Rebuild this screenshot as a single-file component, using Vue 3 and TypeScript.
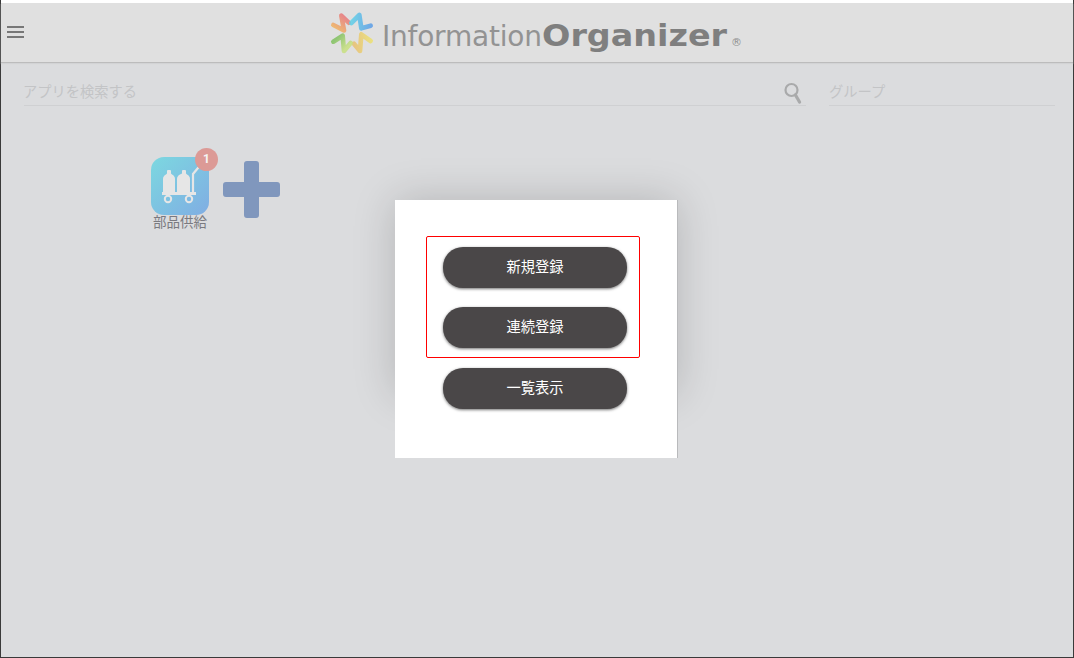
<script setup lang="ts">
const logoArms = [
  { id: 'armA', from: '#e8787a', to: '#f0b060', points: '40,82 72,98 64,54 86,75', x1: 65, y1: 50, x2: 38, y2: 85 },
  { id: 'armB', from: '#5fd0e8', to: '#5a9ce6', points: '94,76 118,52 124,92 152,84', x1: 93, y1: 78, x2: 155, y2: 85 },
  { id: 'armC', from: '#ece070', to: '#e8c070', points: '152,130 124,110 120,160 102,138', x1: 155, y1: 130, x2: 102, y2: 136 },
  { id: 'armD', from: '#80c060', to: '#c8e080', points: '40,132 68,114 72,160 92,136', x1: 38, y1: 133, x2: 68, y2: 162 },
]
</script>

<template>
  <div class="page">
    <header class="topbar">
      <button class="menu" aria-label="menu"><span></span><span></span><span></span></button>
      <div class="logo">
        <svg class="logo-mark" viewBox="30 40 132 132" width="44" height="44">
          <defs>
            <linearGradient v-for="arm in logoArms" :id="arm.id" :key="arm.id" gradientUnits="userSpaceOnUse"
              :x1="arm.x1" :y1="arm.y1" :x2="arm.x2" :y2="arm.y2">
              <stop offset="0" :stop-color="arm.from" />
              <stop offset="1" :stop-color="arm.to" />
            </linearGradient>
          </defs>
          <polyline v-for="arm in logoArms" :key="arm.id" :points="arm.points" fill="none" :stroke="`url(#${arm.id})`"
            stroke-width="14" stroke-linecap="round" stroke-linejoin="round" opacity="0.85" />
        </svg>
        <span class="logo-text">Information<b>Organizer</b></span>
        <span class="logo-reg">®</span>
      </div>
    </header>

    <div class="filters">
      <div class="field search">
        <span class="placeholder">アプリを検索する</span>
        <svg class="search-icon" viewBox="0 0 18 22" width="18" height="22">
          <circle cx="7.500" cy="8" r="6" fill="none" stroke="#a9aaab" stroke-width="2.200" />
          <path d="M11.500 13l4 7" fill="none" stroke="#a9aaab" stroke-width="3.200" stroke-linecap="round" />
        </svg>
      </div>
      <div class="field group">
        <span class="placeholder">グループ</span>
      </div>
    </div>

    <div class="apps">
      <div class="app">
        <div class="app-tile">
          <svg viewBox="0 0 58 58" width="58" height="58">
            <g fill="#e6e6e6">
              <path d="M12 35V22q0-3 3-4.500l1-1V14q0-1 1-1h2q1 0 1 1v2.500l1 1q3 1.500 3 4.500v13z" />
              <path d="M26 35V22q0-3 3-4.500l2-1V14q0-1 1-1h2q1 0 1 1v2.500l1 1q3 1.500 3 4.500v13z" />
              <rect x="11" y="35" width="34" height="3" />
            </g>
            <path d="M42 36V17l5-6" fill="none" stroke="#e6e6e6" stroke-width="2.200" stroke-linecap="round" />
            <circle cx="17" cy="42" r="3.200" fill="none" stroke="#e6e6e6" stroke-width="2" />
            <circle cx="38" cy="42" r="3.200" fill="none" stroke="#e6e6e6" stroke-width="2" />
          </svg>
          <span class="badge">1</span>
        </div>
        <span class="app-label">部品供給</span>
      </div>
      <svg class="add" viewBox="0 0 57 57" width="57" height="57">
        <path d="M21 3q0-3 3-3h9q3 0 3 3v18h18q3 0 3 3v9q0 3-3 3H36v18q0 3-3 3h-9q-3 0-3-3V36H3q-3 0-3-3v-9q0-3 3-3h18z" fill="#8097bd" />
      </svg>
    </div>

    <div class="dialog">
      <div class="highlight">
        <button class="action">新規登録</button>
        <button class="action">連続登録</button>
      </div>
      <button class="action last">一覧表示</button>
    </div>
  </div>
</template>

<style>
html, body { margin: 0; }
</style>

<style scoped>
.page {
  position: relative;
  z-index: 0;
  box-sizing: border-box;
  height: 658px;
  padding-top: 3px;
  background: linear-gradient(#fff 3px, #dbdcde 3px);
  border: solid #3a3a3a;
  border-width: 0 1px 1px;
  font-family: "Noto Sans CJK JP", "Liberation Sans", sans-serif;
}

.topbar {
  position: relative;
  display: flex;
  justify-content: center;
  align-items: center;
  box-sizing: border-box;
  height: 60px;
  background: #e0e0e0;
  border-bottom: 1px solid #bcbcbc;
  box-shadow: 0 1px 1px #d2d3d5;
}

.menu {
  position: absolute;
  left: 6px;
  top: 23px;
  display: flex;
  flex-direction: column;
  gap: 3px;
  width: 17px;
  padding: 0;
  border: 0;
  background: none;
}

.menu span {
  height: 2px;
  background: #777;
}

.logo {
  display: flex;
  align-items: center;
  margin-left: -2px;
  padding-top: 7px;
}

.logo-mark {
  margin: -7px 8px 0 0;
}

.logo-text {
  font-family: "DejaVu Sans", sans-serif;
  font-size: 28px;
  line-height: 36px;
  color: #939393;
  letter-spacing: -0.2px;
}

/* the wordmark is wider than any installed bold face */
.logo-text b {
  display: inline-block;
  margin-right: 19px;
  color: #7f7f7f;
  font-size: 30px;
  letter-spacing: 0;
  transform: scaleX(1.113);
  transform-origin: left;
}

.logo-reg {
  align-self: flex-end;
  margin: 0 0 6px 4px;
  font-family: "DejaVu Sans", sans-serif;
  font-size: 11px;
  color: #8f8f8f;
}

.filters {
  display: flex;
  gap: 23px;
  padding: 16px 18px 0 23px;
}

.field {
  display: flex;
  align-items: center;
  justify-content: space-between;
  box-sizing: border-box;
  height: 27px;
  padding-bottom: 4px;
  border-bottom: 1px solid #cfd0d2;
}

.search {
  flex: 0 0 782px;
}

.search .placeholder {
  margin-left: -1px;
}

.group {
  flex: 1;
}

.placeholder {
  font-size: 14.25px;
  color: #c3c4c6;
}

.search-icon {
  margin: 6px 4px 0 0;
}

.apps {
  display: flex;
  align-items: flex-start;
  gap: 14px;
  padding: 51px 0 0 150px;
}

.app {
  display: flex;
  flex-direction: column;
  align-items: center;
  width: 58px;
}

.app-tile {
  position: relative;
  width: 58px;
  height: 58px;
  border-radius: 13px;
  background: linear-gradient(135deg, #7cd8e0, #80ade3);
}

.app-tile svg {
  display: block;
}

.badge {
  position: absolute;
  top: -9px;
  right: -9px;
  width: 23px;
  height: 23px;
  border-radius: 50%;
  background: #dc9a96;
  color: #f4f4f4;
  font: 700 12px/23px "Roboto", sans-serif;
  text-align: center;
}

.app-label {
  margin-top: -2px;
  font-size: 13.5px;
  line-height: 16px;
  color: #7a7a80;
  white-space: nowrap;
}

.add {
  margin-top: 4px;
}

.dialog {
  position: absolute;
  left: 394px;
  top: 200px;
  display: flex;
  flex-direction: column;
  align-items: flex-start;
  box-sizing: border-box;
  width: 283px;
  height: 258px;
  padding: 36px 0 0 31px;
  background: #fff;
  border-right: 1px solid #b9babc;
}

/* the soft shadow only falls round the upper part of the dialog */
.dialog::before {
  content: "";
  position: absolute;
  z-index: -1;
  left: 0;
  right: 0;
  top: 0;
  height: 195px;
  box-shadow: 0 0 40px rgba(0, 0, 0, 0.18);
}

.highlight {
  display: flex;
  flex-direction: column;
  gap: 19.5px;
  align-items: flex-start;
  box-sizing: border-box;
  width: 214px;
  height: 122px;
  margin-bottom: 10px;
  padding: 9.5px 0 0 16px;
  border: 1px solid #f00;
  border-radius: 2px;
}

.action {
  flex: none;
  box-sizing: border-box;
  width: 184px;
  height: 41px;
  padding: 0 0 4px;
  border: 0;
  border-radius: 20px;
  background: #4a4748;
  box-shadow: 0 1px 3px rgba(0, 0, 0, 0.55);
  color: #fff;
  font-family: inherit;
  font-size: 14.25px;
}

.last {
  margin-left: 17px;
}
</style>
